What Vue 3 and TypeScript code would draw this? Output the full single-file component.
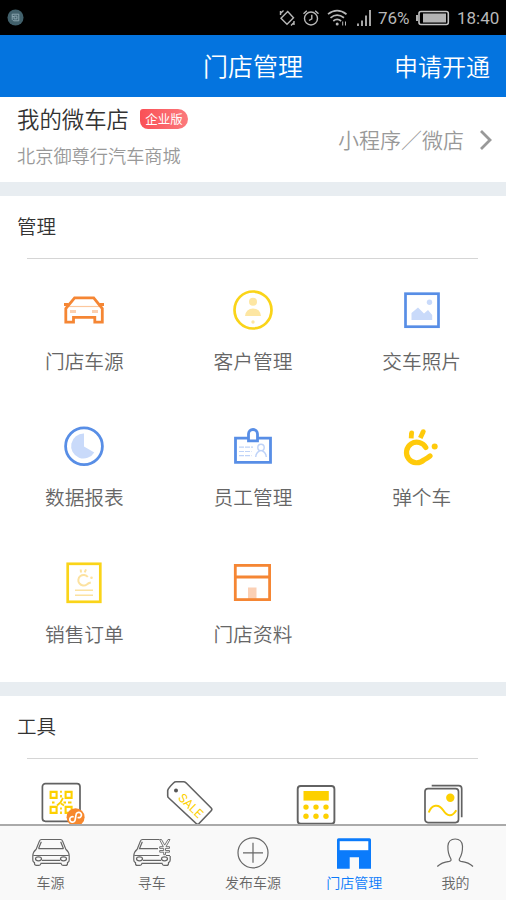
<script setup lang="ts">
import { ref } from 'vue'

interface Entry {
  id: string
  label: string
}

const management: Entry[] = [
  { id: 'car', label: '门店车源' },
  { id: 'customer', label: '客户管理' },
  { id: 'photo', label: '交车照片' },
  { id: 'report', label: '数据报表' },
  { id: 'staff', label: '员工管理' },
  { id: 'tangeche', label: '弹个车' },
  { id: 'order', label: '销售订单' },
  { id: 'store', label: '门店资料' },
]

const tools: string[] = ['qr', 'sale', 'calculator', 'gallery']

const tabs: Entry[] = [
  { id: 'source', label: '车源' },
  { id: 'seek', label: '寻车' },
  { id: 'publish', label: '发布车源' },
  { id: 'manage', label: '门店管理' },
  { id: 'mine', label: '我的' },
]

const activeTab = ref('manage')
const keypad: number[][] = [16, 26, 36].flatMap((x) => [29.1, 38.2].map((y) => [x, y]))
</script>

<template>
  <div class="app">
    <div class="status">
      <svg class="status-app" viewBox="0 0 18 18">
        <circle cx="9" cy="9" r="8.5" fill="#41606b" />
        <path d="M5.500 5.500h7v7h-5.500l-1.500-1.500z M7.500 7.500h3v3h-3z M5.500 8h2" fill="none" stroke="#8fa9b4" />
      </svg>
      <div class="status-right">
        <svg class="s-rotate" viewBox="0 0 18 18" fill="none" stroke="#b8b8b8" stroke-width="1.400">
          <path d="M9.700 2.500l5.800 6.200-6.500 6.500-6-6z" />
          <path d="M2.500 6V2M2.500 4.500l3-3M16 12v4M16 13.500l-3 3" />
        </svg>
        <svg class="s-alarm" viewBox="0 0 18 18" fill="none" stroke="#b8b8b8" stroke-width="1.400">
          <circle cx="9" cy="9.500" r="6.500" />
          <path d="M9.800 5.800v4L7 11.500M1.500 4.800l3.300-3.100M16.500 4.800l-3.300-3.100" />
        </svg>
        <svg class="s-wifi" viewBox="0 0 22 18" fill="none" stroke="#b8b8b8" stroke-width="1.700">
          <path d="M1 5.200Q10 -1.800 19.500 5.200M3.500 8.800q6.500-5.200 13.500 0M6.300 12q3.800-3.200 7.800 0" />
          <circle cx="10.200" cy="15" r="1.500" fill="#b8b8b8" stroke="none" />
          <path d="M15.700 12.500v4M18.500 12.500v4" stroke-width="1" />
        </svg>
        <svg class="s-signal" viewBox="0 0 14 18" stroke="#b8b8b8" stroke-width="1.800">
          <path d="M1 14.500v2.500M5 11.500v5.500M9 6.500v10.500M13 1v16" />
        </svg>
        <span class="s-percent">76%</span>
        <svg class="s-battery" viewBox="0 0 34 16">
          <rect x="3" y="1.500" width="29.300" height="13" rx="2" fill="none" stroke="#c4c4c4" stroke-width="1.600" />
          <rect x="7" y="3.500" width="23" height="9" fill="#b4b4b4" />
          <path d="M1 5v6" stroke="#c4c4c4" stroke-width="1.800" />
        </svg>
        <span class="s-time">18:40</span>
      </div>
    </div>

    <header class="header">
      <h1>门店管理</h1>
      <a class="apply">申请开通</a>
    </header>

    <main class="content">
      <section class="shop">
        <div class="shop-info">
          <div class="shop-line">
            <span class="shop-title">我的微车店</span>
            <span class="badge">企业版</span>
          </div>
          <div class="shop-name">北京御尊行汽车商城</div>
        </div>
        <div class="shop-link">
          <span>小程序／微店</span>
          <svg class="chevron" viewBox="0 0 14 22">
            <path d="M2 2l9 9-9 9" fill="none" stroke="#999" stroke-width="2.800" />
          </svg>
        </div>
      </section>

      <section class="panel">
        <h2>管理</h2>
        <div class="rule"></div>
        <div class="grid">
          <div v-for="item in management" :key="item.id" class="cell">
            <svg class="icon" viewBox="0 0 44 44" fill="none">
              <g v-if="item.id === 'car'">
                <path d="M7 18.500h30" stroke="#fcc79d" stroke-width="1.200" />
                <path d="M8 23.500h6M30 23.500h6" stroke="#fbd0b0" stroke-width="3" />
                <path d="M3.800 34.200V20.500L12.600 9.900h19.100l8.600 10.600v13.700h-7.500v-4.800H11.500v4.800z" stroke="#f58634" stroke-width="2.800" />
                <path d="M2 16.500h4.500M37.500 16.500h4.500" stroke="#f58634" stroke-width="3" />
              </g>
              <g v-else-if="item.id === 'customer'">
                <circle cx="22" cy="22" r="18.500" stroke="#fad419" stroke-width="2.700" />
                <circle cx="22" cy="13.700" r="4" fill="#fde6a2" />
                <path d="M14 28q1-7.500 8-7.500t8 7.500z" fill="#fde6a2" />
                <circle cx="22" cy="34" r="1.700" fill="#fde6a2" />
              </g>
              <g v-else-if="item.id === 'photo'">
                <rect x="5.500" y="5.700" width="33" height="33" stroke="#588ee6" stroke-width="2.700" />
                <path d="M11.500 32v-7l6.500-5.500 6 6 4-3.500 4.200 5v5z" fill="#c9dafa" />
                <circle cx="29.500" cy="14.300" r="2.700" fill="#c9dafa" />
              </g>
              <g v-else-if="item.id === 'report'">
                <circle cx="22" cy="22.300" r="18.400" stroke="#588ee6" stroke-width="2.800" />
                <path d="M22 9.500a12.500 12.500 0 1 0 10.300 19L22 22.500z" fill="#c9dafa" />
              </g>
              <g v-else-if="item.id === 'staff'">
                <path d="M17 14.200H4.500v24.200h35V14.200H27" stroke="#588ee6" stroke-width="2.800" />
                <path d="M17.500 16.800V10a4.500 4.500 0 0 1 9 0v6.800z" stroke="#588ee6" stroke-width="2.800" />
                <path d="M8 23.200h14M8 27.500h12.500M8 31.700h12.500" stroke="#bfd3f8" stroke-width="1.200" stroke-dasharray="5 1" />
                <circle cx="30" cy="23.500" r="3.200" stroke="#bfd3f8" stroke-width="1.400" />
                <path d="M24.700 33q.4-4.700 4-6M35.300 33q-.4-4.700-4-6" stroke="#bfd3f8" stroke-width="1.400" />
              </g>
              <g v-else-if="item.id === 'tangeche'" stroke="#ffca0a">
                <path d="M25.800 23.500A10.300 10.300 0 1 0 23.800 36Q27 34.500 30 32" stroke-width="5.200" stroke-linecap="round" />
                <path d="M11.200 14.300L11.500 9M20.300 14L23.200 7.800" stroke-width="4.800" />
                <circle cx="11.700" cy="8.800" r="2.400" fill="#ffca0a" stroke="none" />
                <circle cx="23.300" cy="7.600" r="2.400" fill="#ffca0a" stroke="none" />
                <circle cx="34.700" cy="22.500" r="3" fill="#ffca0a" stroke="none" />
              </g>
              <g v-else-if="item.id === 'order'">
                <rect x="5.700" y="2.800" width="32.600" height="38" stroke="#fad419" stroke-width="2.700" />
                <path d="M25.800 16a5.300 5.300 0 1 0-1 7.500q1.500-1.500 4-2M19 11.500l-.3-3M22.700 11.300l1.300-3" stroke="#fce2a0" stroke-width="2" />
                <circle cx="29.500" cy="16.800" r="1.300" fill="#fce2a0" />
                <path d="M13 29.300h18M13 34.300h18" stroke="#fce2a0" stroke-width="1.500" />
              </g>
              <g v-else>
                <rect x="17" y="26.500" width="8.500" height="12" fill="#fbd0b5" />
                <rect x="4.300" y="4.400" width="34.300" height="34.200" stroke="#f58634" stroke-width="2.800" />
                <path d="M4 16h35" stroke="#f58634" stroke-width="2.800" />
              </g>
            </svg>
            <span class="label">{{ item.label }}</span>
          </div>
        </div>
      </section>

      <section class="panel">
        <h2>工具</h2>
        <div class="rule"></div>
        <div class="tools">
          <div v-for="tool in tools" :key="tool" class="tool">
            <svg class="tool-icon" viewBox="0 0 52 52" fill="none">
              <g v-if="tool === 'qr'">
                <rect x="5.400" y="5.700" width="37.600" height="37.600" rx="3" stroke="#626262" stroke-width="1.700" />
                <path d="M13.600 13.900h6v6h-6zM28.600 13.900h6v6h-6zM13.600 28.900h6v6h-6zM28.600 28.900h6v6h-6z" stroke="#fdd000" stroke-width="2.100" />
                <path d="M24 12.700v2M24 17v2.500M26 20l-2.500 4.500-3.500 3M15 24.500h2.500M26.500 24.500h2.500M31 24.500h3.500M24 25.500l3 2M24 29.500v2M24 33.500v2.500" stroke="#fdd000" stroke-width="1.800" />
                <circle cx="38.600" cy="39.200" r="9" fill="#f7882d" />
                <path d="M36 39.200a2.700 2.700 0 1 0 2.600 2.600v-5.200a2.700 2.700 0 1 1 2.700 2.600" transform="rotate(10 38.600 39.200)" stroke="#fff" stroke-width="1.700" stroke-linecap="round" />
              </g>
              <g v-else-if="tool === 'sale'">
                <path d="M3.700 12.500Q4.300 10 9.500 5q1.200-1.200 2.500-1.200h7.500q1.400 0 2.500 1L47.200 30q1.300 1.300 0 2.700L35 45.500q-1.400 1.400-2.800 0L4.800 20Q3.700 19.100 3.700 18z" stroke="#626262" stroke-width="1.600" />
                <circle cx="12" cy="12.400" r="2" fill="#555" />
                <text class="sale-text" transform="translate(13.500 20.800) rotate(44)">SALE</text>
              </g>
              <g v-else-if="tool === 'calculator'">
                <rect x="7.700" y="8" width="36.700" height="37.800" rx="3" stroke="#626262" stroke-width="1.900" />
                <rect x="13.500" y="13" width="25.300" height="9.600" fill="#fdd000" />
                <circle v-for="[x, y] in keypad" :key="`${x}-${y}`" :cx="x" :cy="y" r="2.700" fill="#fdd000" />
              </g>
              <g v-else>
                <path d="M14.700 7.700h27q3 0 3 3v28.500" stroke="#626262" stroke-width="1.700" />
                <rect x="8" y="10.600" width="33.500" height="34" rx="3" stroke="#626262" stroke-width="1.700" />
                <circle cx="33.300" cy="19.800" r="4.200" fill="#fdd000" />
                <path d="M11.700 34.500c3-8 10-9 14.300-2.500s9 7.500 13.300.3" stroke="#fdd000" stroke-width="2" />
              </g>
            </svg>
          </div>
        </div>
      </section>
    </main>

    <nav class="tabbar">
      <a v-for="tab in tabs" :key="tab.id" class="tab" :class="{ active: tab.id === activeTab }" @click="activeTab = tab.id">
        <svg class="tab-icon" viewBox="0 0 40 34" fill="none" stroke="currentColor" stroke-width="1.200">
          <g v-if="tab.id === 'source'">
            <path d="M10.500 3.500h19q1.500 0 2 1.400l3.300 8.300q3.400 2.800 3.400 6.800v4q0 2-1.700 2.600v.8q0 2-2 2H32q-1.500 0-2-2H10q-.5 2-2 2H5.500q-2 0-2-2v-.8Q1.800 26 1.800 24v-4q0-4 3.400-6.800l3.300-8.300q.5-1.400 2-1.400z" />
            <path d="M7.500 12.700h25M10.300 5.700L7.500 12.700M29.700 5.700l2.800 7M2.300 19.500h35.400M11 24.300h18" />
            <ellipse cx="7.500" cy="22.800" rx="3" ry="2" />
            <ellipse cx="32.500" cy="22.800" rx="3" ry="2" />
          </g>
          <g v-else-if="tab.id === 'seek'">
            <path d="M27 3.500H10.500q-1.500 0-2 1.400L5.200 13.200Q1.800 16 1.800 20v4q0 2 1.700 2.600v.8q0 2 2 2H8q1.500 0 2-2h20q.5 2 2 2h2.500q2 0 2-2v-.8q1.700-.6 1.700-2.600v-4" />
            <path d="M10.300 5.700L7.500 12.700h18.500M2.300 19.500h25M34 19.500h4M11 24.300h18" />
            <ellipse cx="7.500" cy="22.800" rx="3" ry="2" />
            <ellipse cx="32.500" cy="22.800" rx="3" ry="2" />
            <path d="M27.500 3.500h2l3.200 5.600L36 3.500h2l-4 7.200h3.500v1.700h-4v2.100h4v1.700h-4v2.500h-1.800v-2.500h-4v-1.700h4v-2.100h-4v-1.700h3.600z" stroke-width=".9" />
          </g>
          <g v-else-if="tab.id === 'publish'">
            <circle cx="20" cy="16.800" r="15" />
            <path d="M10 16.800h20M20 6.800v20" />
          </g>
          <g v-else-if="tab.id === 'manage'" stroke="none">
            <path d="M4.500 2.200h31q1.500 0 1.500 1.500v29H25V21.200h-9.300v11.500H3v-29q0-1.500 1.500-1.500z" fill="currentColor" />
            <path d="M5.700 5.200h28.600v9H5.700z" fill="#fff" />
          </g>
          <g v-else>
            <path d="M2.300 30.500q4-4.200 12-5.200 2.500-.4 1.500-2.600Q12.700 17.500 12.900 10q.6-7 7.300-7t7.300 7q.2 7.500-3 12.700-1 2.200 1.500 2.600 8 1 12 5.200" />
          </g>
        </svg>
        <span>{{ tab.label }}</span>
      </a>
    </nav>
  </div>
</template>

<style>
body {
  margin: 0;
  background: #fff;
}
</style>

<style scoped>
.app {
  display: flex;
  flex-direction: column;
  width: 100%;
  height: 900px;
  overflow: hidden;
  background: #fff;
  font-family: "Noto Sans CJK SC", sans-serif;
  font-weight: 350;
  white-space: nowrap;
}
svg {
  display: block;
  flex: none;
}
.status {
  flex: none;
  box-sizing: border-box;
  height: 35px;
  padding: 0 7px;
  display: flex;
  align-items: center;
  justify-content: space-between;
  background: #000;
  color: #b8b8b8;
  font-family: Roboto, sans-serif;
  font-weight: 400;
}
.status-app {
  width: 17px;
  height: 17px;
}
.status-right {
  display: flex;
  align-items: center;
}
.s-rotate,
.s-alarm {
  width: 18px;
  height: 18px;
}
.s-rotate {
  margin-right: 6px;
}
.s-alarm {
  margin-right: 7px;
}
.s-wifi {
  width: 22px;
  height: 18px;
  margin-right: 8px;
}
.s-signal {
  width: 14px;
  height: 18px;
  margin-right: 7px;
}
.s-percent {
  width: 38px;
  font-size: 17px;
  line-height: 35px;
  padding-top: 2px;
}
.s-battery {
  width: 34px;
  height: 16px;
}
.s-time {
  width: 42px;
  margin-left: 7px;
  font-size: 17px;
  line-height: 35px;
  padding-top: 2px;
}
.header {
  flex: none;
  box-sizing: border-box;
  height: 62px;
  display: grid;
  grid-template-columns: 1fr auto 1fr;
  align-items: center;
  padding: 0 16px 2px;
  background: #0474df;
  color: #fff;
}
.header h1 {
  grid-column: 2;
  margin: 0;
  font-size: 25px;
  font-weight: 350;
  line-height: 60px;
}
.apply {
  justify-self: end;
  font-size: 24px;
}
.content {
  flex: 1;
  min-height: 0;
  overflow: hidden;
}
.shop {
  box-sizing: border-box;
  height: 85px;
  padding: 6px 13px 0 17px;
  display: flex;
  justify-content: space-between;
}
.shop-line {
  display: flex;
  align-items: center;
  gap: 11px;
  height: 32px;
}
.shop-title {
  padding-bottom: 2px;
  font-size: 22.4px;
  color: #333;
}
.badge {
  width: 48px;
  height: 20px;
  border-radius: 3px 10px 10px 8px;
  background: linear-gradient(90deg, #fa5056, #fb797c);
  color: #fff;
  font-size: 12.5px;
  font-weight: 400;
  line-height: 19px;
  text-align: center;
}
.shop-name {
  margin-top: 7px;
  font-size: 18.2px;
  line-height: 26px;
  color: #999;
}
.shop-link {
  display: flex;
  align-items: center;
  height: 73px;
  font-size: 21px;
  color: #999;
}
.shop-link span {
  padding-bottom: 2px;
}
.chevron {
  width: 14px;
  height: 22px;
  margin-left: 15px;
}
.panel {
  border-top: 14px solid #e8edf1;
}
.panel h2 {
  margin: 0;
  padding: 0 0 2px 17px;
  font-size: 19.5px;
  font-weight: 350;
  line-height: 60px;
  color: #333;
}
.rule {
  height: 1px;
  margin: 0 28px 0 27px;
  background: #d5d5d5;
}
.grid {
  display: grid;
  grid-template-columns: repeat(3, 1fr);
  grid-auto-rows: 136.3px;
  box-sizing: border-box;
  height: 423px;
}
.cell {
  box-sizing: border-box;
  padding-top: 29px;
  display: flex;
  flex-direction: column;
  align-items: center;
}
.icon {
  width: 44px;
  height: 44px;
}
.label {
  margin-top: 14px;
  font-size: 19.7px;
  line-height: 30px;
  color: #666;
}
.tools {
  display: grid;
  grid-template-columns: repeat(4, 1fr);
  padding-top: 19px;
}
.tool {
  display: flex;
  justify-content: center;
}
.tool-icon {
  width: 52px;
  height: 52px;
}
.sale-text {
  font-family: Roboto, sans-serif;
  font-size: 12.2px;
  font-weight: 400;
  fill: #fdd000;
}
.tabbar {
  flex: none;
  box-sizing: border-box;
  height: 76px;
  display: grid;
  grid-template-columns: repeat(5, 1fr);
  border-top: 2px solid #aaa;
  background: #f9f9f9;
}
.tab {
  display: flex;
  flex-direction: column;
  align-items: center;
  padding-top: 10px;
  font-size: 14px;
  line-height: 20px;
  color: #666;
}
.tab-icon {
  width: 40px;
  height: 34px;
}
.tab span {
  margin-top: 2px;
}
.tab.active {
  color: #0b7bfb;
}
</style>
